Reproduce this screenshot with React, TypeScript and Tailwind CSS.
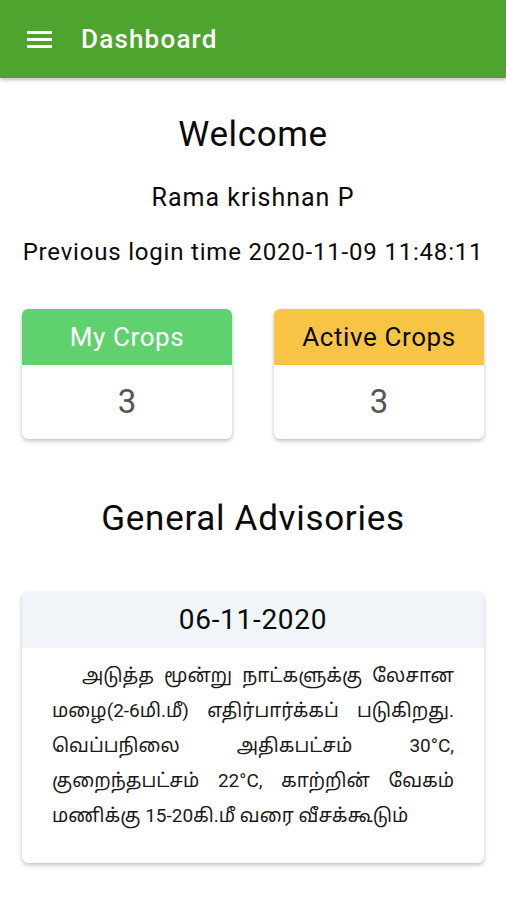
import React from "react";

const StatCard = ({ title, value, head }: { title: string; value: number; head: string }) => {
  return (
    <div className="w-[210px] rounded-md bg-white shadow-[0_2px_4px_0_rgba(0,0,0,0.25)] overflow-hidden">
      <div className={`h-[56px] flex items-center justify-center text-[26px] tracking-[0.6px] ${head}`}>{title}</div>
      <div className="h-[74px] flex items-center justify-center text-[33px] text-[#555]">{value}</div>
    </div>
  );
};

export default function App() {
  return (
    <div className="min-h-[900px] bg-white" style={{ fontFamily: "Roboto, 'Noto Sans', 'Noto Sans Tamil', sans-serif" }}>
      <header className="h-[78px] bg-[#4da42e] flex items-center px-[27px] shadow-[0_2px_4px_rgba(0,0,0,0.25)]">
        <svg width="26" height="20" viewBox="0 0 26 20" className="mr-[28px]">
          <rect x="0" y="2" width="25" height="3" fill="white" />
          <rect x="0" y="9" width="25" height="3" fill="white" />
          <rect x="0" y="16" width="25" height="3" fill="white" />
        </svg>
        <h1 className="text-white text-[26px] font-medium tracking-[1.2px]">Dashboard</h1>
      </header>

      <section className="flex flex-col items-center text-[#0a0a0a]">
        <h2 className="mt-[33px] text-[35px] leading-[48px] tracking-[0.6px]">Welcome</h2>
        <p className="mt-[24px] text-[25px] leading-[30px] tracking-[1px]">Rama krishnan P</p>
        <p className="mt-[24px] text-[24px] leading-[30px] tracking-[0.8px]">Previous login time 2020-11-09 11:48:11</p>
      </section>

      <div className="flex justify-between px-[22px] mt-[42px]">
        <StatCard title="My Crops" value={3} head="bg-[#5fd16f] text-white" />
        <StatCard title="Active Crops" value={3} head="bg-[#f8c445] text-[#0a0a0a]" />
      </div>

      <h2 className="mt-[56px] text-center text-[35px] leading-[48px] text-[#0a0a0a] tracking-[0.7px]">General Advisories</h2>

      <div className="mx-[22px] mt-[49px] rounded-md bg-white shadow-[0_2px_4px_0_rgba(0,0,0,0.25)] overflow-hidden">
        <div className="h-[56px] bg-[#f1f4f8] flex items-center justify-center text-[28px] tracking-[0.7px] text-[#0a0a0a]">06-11-2020</div>
        <p className="px-[30px] pt-[10px] pb-[30px] text-[19px] leading-[35px] text-[#1a1a1a] text-justify indent-[30px]">
          அடுத்த மூன்று நாட்களுக்கு லேசான மழை(2-6மி.மீ) எதிர்பார்க்கப் படுகிறது. வெப்பநிலை அதிகபட்சம் 30°C, குறைந்தபட்சம் 22°C, காற்றின் வேகம் மணிக்கு 15-20கி.மீ வரை வீசக்கூடும்
        </p>
      </div>
    </div>
  );
}
